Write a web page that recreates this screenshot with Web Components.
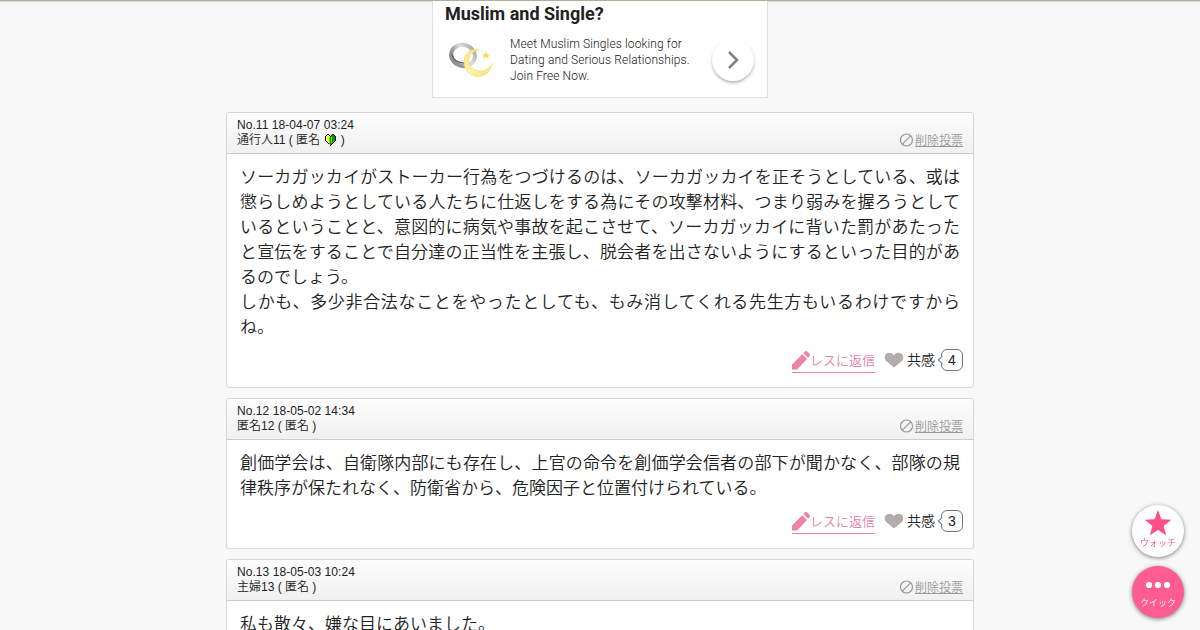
<!DOCTYPE html>
<html lang="ja">
<head>
<meta charset="utf-8">
<title>スレッド</title>
<style>
  html, body {
    margin: 0;
    height: 630px;
    overflow: hidden;
  }
  body {
    background: #f8f8f8;
    color: #222;
    font-family: "Liberation Sans", "Noto Sans CJK JP", sans-serif;
    font-weight: 350;
  }
</style>
</head>
<body>
<thread-page>
  <ad-banner heading="Muslim and Single?">Meet Muslim Singles looking for<br>Dating and Serious Relationships.<br>Join Free Now.</ad-banner>
  <res-card no="No.11" date="18-04-07 03:24" name="通行人11" likes="4" beginner>ソーカガッカイがストーカー行為をつづけるのは、ソーカガッカイを正そうとしている、或は懲らしめようとしている人たちに仕返しをする為にその攻撃材料、つまり弱みを握ろうとしているということと、意図的に病気や事故を起こさせて、ソーカガッカイに背いた罰があたったと宣伝をすることで自分達の正当性を主張し、脱会者を出さないようにするといった目的があるのでしょう。<br>しかも、多少非合法なことをやったとしても、もみ消してくれる先生方もいるわけですからね。</res-card>
  <res-card no="No.12" date="18-05-02 14:34" name="匿名12" likes="3">創価学会は、自衛隊内部にも存在し、上官の命令を創価学会信者の部下が聞かなく、部隊の規律秩序が保たれなく、防衛省から、危険因子と位置付けられている。</res-card>
  <res-card no="No.13" date="18-05-03 10:24" name="主婦13">私も散々、嫌な目にあいました。</res-card>
  <round-button slot="float" label="ウォッチ">
    <svg width="28" height="27" viewBox="0 0 28 27"><path fill="#ff4f86" d="M14 0l3.400 9.300 9.900.4-7.700 6.200 2.600 9.400L14 20l-8.200 5.300 2.600-9.400L.7 9.700l9.900-.4z"/></svg>
  </round-button>
  <round-button slot="float" label="クイック" filled>
    <svg width="28" height="26" viewBox="0 0 28 26"><g fill="#fff"><circle cx="5" cy="14" r="3.100"/><circle cx="14" cy="14" r="3.100"/><circle cx="23" cy="14" r="3.100"/></g></svg>
  </round-button>
</thread-page>

<script>
class ThreadPage extends HTMLElement {
  constructor() {
    super();
    this.attachShadow({ mode: 'open' }).innerHTML = `
      <style>
        :host {
          display: block;
          box-sizing: border-box;
          height: 630px;
          overflow: hidden;
          border-top: 1px solid #aeae9c;
          box-shadow: inset 0 1px 0 #dedfd6;
        }
        main {
          display: flex;
          flex-direction: column;
          align-items: center;
          gap: 10px;
        }
        aside {
          position: fixed;
          right: 16px;
          bottom: 12px;
          display: flex;
          flex-direction: column;
          gap: 9px;
        }
      </style>
      <main><slot></slot></main>
      <aside><slot name="float"></slot></aside>
    `;
  }
}

class AdBanner extends HTMLElement {
  constructor() {
    super();
    this.attachShadow({ mode: 'open' }).innerHTML = `
      <style>
        :host {
          display: block;
          box-sizing: border-box;
          width: 336px;
          height: 97px;
          margin-bottom: 4px;
          padding: 0 13px 0 12px;
          background: #fff;
          border: 1px solid #e0e0e0;
          border-top: 0;
          font-family: Roboto, sans-serif;
        }
        h2 {
          margin: 0;
          padding-top: 2px;
          font-size: 18px;
          font-weight: 700;
          line-height: 22px;
          color: #212121;
        }
        .row {
          display: flex;
          align-items: center;
          height: 70px;
        }
        .rings {
          flex: none;
          width: 50px;
          margin-right: 15px;
        }
        p {
          flex: 1;
          margin: 0;
          font-size: 12px;
          font-weight: 300;
          line-height: 16px;
          letter-spacing: .12px;
          white-space: nowrap;
          color: #212121;
        }
        .go {
          display: flex;
          align-items: center;
          justify-content: center;
          width: 42px;
          height: 42px;
          border-radius: 50%;
          background: #fff;
          box-shadow: 0 2px 3px rgba(0, 0, 0, .28);
        }
      </style>
      <h2></h2>
      <div class="row">
        <svg class="rings" width="50" height="40" viewBox="0 0 50 40">
          <defs>
            <linearGradient id="silver" x1="0" y1="1" x2="1" y2="0">
              <stop offset="0" stop-color="#888"/><stop offset=".3" stop-color="#999"/>
              <stop offset=".6" stop-color="#ddd"/><stop offset="1" stop-color="#999"/>
            </linearGradient>
            <linearGradient id="gold" x1="0" y1="0" x2="1" y2="1">
              <stop offset="0" stop-color="#f8e27a"/><stop offset=".5" stop-color="#fdf3b0"/>
              <stop offset="1" stop-color="#f6df72"/>
            </linearGradient>
          </defs>
          <ellipse cx="18" cy="15.500" rx="12" ry="10.500" fill="none" stroke="url(#silver)" stroke-width="4" transform="rotate(15 18 15.500)"/>
          <path fill="none" stroke="#666" stroke-width="1.500" d="M7 14c1 6 6 9.500 13 9"/>
          <path fill="url(#gold)" stroke="#f3da68" stroke-width=".6" d="M34 10C25 8 19 14 19 22c0 8 6 14.500 14 14.500 7 0 12-4 14-13-3 5-6 7.500-11 7.500-7 0-12-4-12-10.500C24 14 28 11 34 10z"/>
          <path fill="#f8dc58" d="M41 11l1 3h3l-2 2 1 3-3-2-3 2 1-3-2-2h3z"/>
        </svg>
        <p><slot></slot></p>
        <span class="go">
          <svg width="12" height="20" viewBox="0 0 12 20"><path d="M2 2l8 8-8 8" fill="none" stroke="#808080" stroke-width="2.600"/></svg>
        </span>
      </div>
    `;
    this.shadowRoot.querySelector('h2').textContent = this.getAttribute('heading');
  }
}

// green and yellow leaf shown next to new members
const BEGINNER_MARK = `
  <svg class="mark" width="11" height="12" viewBox="0 0 11 12" shape-rendering="crispEdges">
    <path fill="#111" d="M2 0h2v1h1v1h1V1h1V0h2v1h1v1h1v5h-1v1H9v1H8v1H7v1H6v1H5v-1H4v-1H3V9H2V8H1V7H0V2h1V1h1z"/>
    <path fill="#ffff2e" d="M2 1h2v1h1v9H4V9H3V8H2V7H1V2h1z"/>
    <path fill="#75c940" d="M4 3h1v7H4z"/>
    <path fill="#0a930a" d="M7 1h2v1h1v5H9v1H8v1H7v1H6v1H5V3h1V2h1z"/>
    <path fill="#6fdc50" d="M6 3h1v6H6z"/>
  </svg>`;

class ResCard extends HTMLElement {
  constructor() {
    super();
    const mark = this.hasAttribute('beginner') ? BEGINNER_MARK + ' ' : '';
    const likes = this.getAttribute('likes');
    this.attachShadow({ mode: 'open' }).innerHTML = `
      <style>
        :host {
          display: block;
          box-sizing: border-box;
          width: 748px;
          background: #fff;
          border: 1px solid #d8d8d8;
          border-radius: 3px;
        }
        :host(:not([likes])) {
          height: 90px;
        }
        header {
          display: flex;
          justify-content: space-between;
          box-sizing: border-box;
          height: 41px;
          padding: 5px 10px 0;
          border-bottom: 1px solid #ccc;
          border-radius: 2px 2px 0 0;
          background: linear-gradient(#fcfcfc, #f1f1f1);
          font-size: 12px;
          line-height: 15px;
        }
        .date {
          letter-spacing: .06px;
        }
        .mark {
          vertical-align: -2px;
          margin: 0 1px 0 2px;
        }
        .delete {
          display: flex;
          align-items: center;
          align-self: flex-end;
          gap: 1px;
          height: 15px;
          margin-bottom: 5px;
          color: #999;
        }
        .delete svg {
          margin-top: -1px;
        }
        .delete u {
          padding-top: 2px;
          text-underline-offset: 1px;
        }
        .body {
          padding: 11px 13px 0;
          font-size: 17px;
          line-height: 25px;
          text-align: justify;
        }
        footer {
          display: flex;
          justify-content: flex-end;
          height: 38px;
          padding: 9px 10px 0 0;
        }
        .reply {
          display: flex;
          align-items: center;
          box-sizing: border-box;
          height: 24px;
          margin-right: 9px;
          border-bottom: 1px solid #e87fa5;
          font-size: 13px;
          line-height: 20px;
          color: #e87fa5;
        }
        .like {
          display: flex;
          align-items: center;
          height: 22px;
          font-size: 14px;
          line-height: 20px;
        }
        .like svg {
          margin-right: 3px;
        }
        .count {
          position: relative;
          box-sizing: border-box;
          width: 22px;
          height: 22px;
          margin-left: 6px;
          border: 1px solid #777;
          border-radius: 6px;
          text-align: center;
        }
        /* tail of the bubble */
        .count::before {
          content: "";
          position: absolute;
          left: -3px;
          top: 7px;
          width: 5px;
          height: 5px;
          border: solid #777;
          border-width: 0 0 1px 1px;
          background: #fff;
          transform: rotate(45deg);
        }
      </style>
      <header>
        <div>
          <div class="date">${this.getAttribute('no')} ${this.getAttribute('date')}</div>
          <div>${this.getAttribute('name')} ( 匿名 ${mark})</div>
        </div>
        <div class="delete">
          <svg width="14" height="14" viewBox="0 0 14 14"><g fill="none" stroke="#999" stroke-width="1.200"><circle cx="6.500" cy="7" r="6"/><path d="M2.300 11.200l8.400-8.400"/></g></svg>
          <u>削除投票</u>
        </div>
      </header>
      <div class="body"><slot></slot></div>
      ${likes ? `<footer>
        <div class="reply">
          <svg width="18" height="19" viewBox="0 0 18 19"><path fill="#ee82a3" d="M0 18.500v-5L10.300 3.200l4.700 4.700L5 18.500zM11.400 2.100l1.600-1.600c.6-.6 1.500-.6 2.100 0l2.500 2.500c.6.6.6 1.500 0 2.100L16.100 6.800z"/></svg>
          <span>レスに返信</span>
        </div>
        <div class="like">
          <svg width="20" height="16" viewBox="0 0 20 16"><path fill="#b3acac" d="M10 15.500L2.500 9.200C-.2 6.600.6 3 2.800 1.600 5.300 0 8.500.8 10 3.500 11.500.8 14.700 0 17.200 1.600c2.200 1.400 3 5 .3 7.600z"/></svg>
          <span>共感</span>
          <span class="count">${likes}</span>
        </div>
      </footer>` : ''}
    `;
  }
}

class RoundButton extends HTMLElement {
  constructor() {
    super();
    this.attachShadow({ mode: 'open' }).innerHTML = `
      <style>
        :host {
          display: flex;
          flex-direction: column;
          align-items: center;
          box-sizing: border-box;
          width: 52px;
          height: 52px;
          padding-top: 5px;
          border-radius: 50%;
          background: #fff;
          box-shadow: 0 1px 4px rgba(0, 0, 0, .5);
          color: #ff4f86;
          font-size: 9px;
          line-height: 13px;
          white-space: nowrap;
        }
        :host([filled]) {
          background: #ff5c8f;
          color: #fff;
        }
        ::slotted(svg) {
          display: block;
        }
      </style>
      <slot></slot>
      <span>${this.getAttribute('label')}</span>
    `;
  }
}

customElements.define('thread-page', ThreadPage);
customElements.define('ad-banner', AdBanner);
customElements.define('res-card', ResCard);
customElements.define('round-button', RoundButton);
</script>
</body>
</html>
